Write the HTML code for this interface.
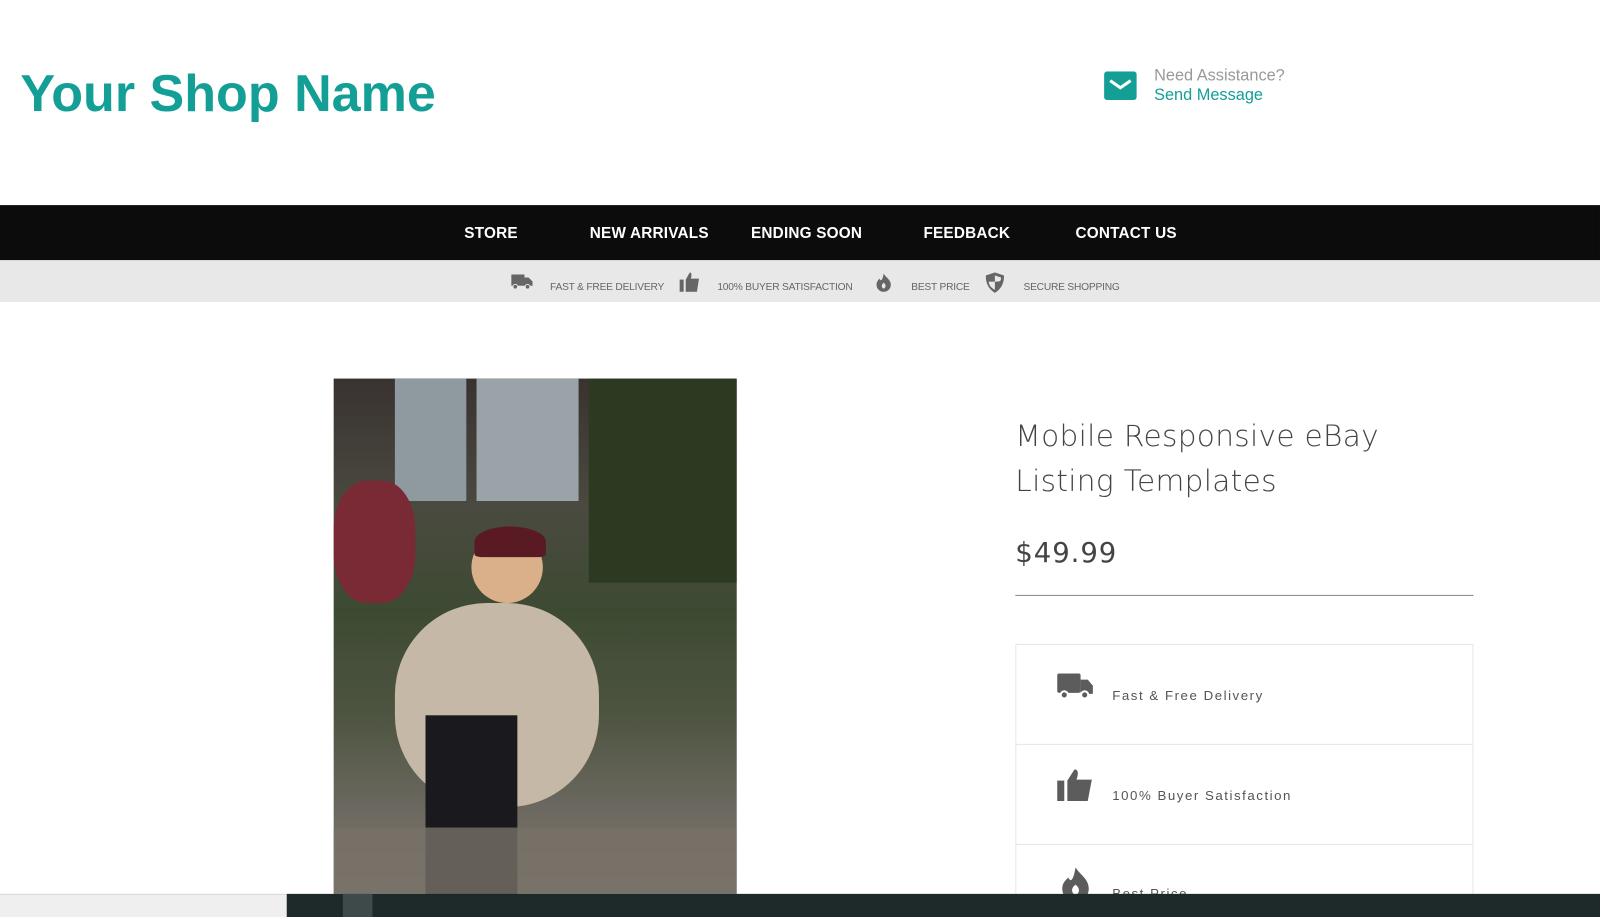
<!DOCTYPE html>
<html><head><meta charset="utf-8"><style>
*{margin:0;padding:0;box-sizing:border-box}
body{width:1600px;height:899px;overflow:hidden;background:#fff;font-family:"Liberation Sans",sans-serif;position:relative}
#w{position:absolute;left:0;top:0;width:1568px;height:881px;transform:scale(1.0204);transform-origin:0 0}
.a{position:absolute}
.nav{left:0;top:201px;width:1568px;height:54px;background:#0c0c0c}
.nav span{position:absolute;top:19px;color:#fff;font-size:15px;font-weight:bold;letter-spacing:0.2px}
.strip{left:0;top:255px;width:1568px;height:41px;background:#e8e8e8}
.strip span{position:absolute;top:21px;color:#666;font-size:10px;letter-spacing:-0.2px}
.box{left:995px;width:449px;border:1px solid #e6e6e6;border-bottom:none;background:#fff}
.box span{position:absolute;left:94px;color:#555;font-size:13px;letter-spacing:1.5px}
</style></head><body><div id="w">
<div class="a" style="left:20px;top:62px;font-size:51px;font-weight:bold;color:#139e96">Your Shop Name</div>
<svg class="a" style="left:1082px;top:70px" width="32" height="28" viewBox="0 0 32 28"><rect width="32" height="28" rx="3" fill="#139e96"/><path d="M6 9 L16 16 L26 9" stroke="#fff" stroke-width="3" fill="none"/></svg>
<div class="a" style="left:1131px;top:66px;font-size:16px;color:#999">Need Assistance?</div>
<div class="a" style="left:1131px;top:85px;font-size:16px;color:#139e96">Send Message</div>
<div class="a nav"><span style="left:455px">STORE</span><span style="left:578px">NEW ARRIVALS</span><span style="left:736px">ENDING SOON</span><span style="left:905px">FEEDBACK</span><span style="left:1054px">CONTACT US</span></div>
<div class="a strip">
<svg class="a" style="left:501px;top:13px" width="21" height="16" viewBox="0 0 21 16"><rect x="0" y="1" width="13" height="11" fill="#666"/><path d="M13 4h4l4 4v4h-8z" fill="#666"/><circle cx="4" cy="13" r="2.3" fill="#666" stroke="#e8e8e8"/><circle cx="16" cy="13" r="2.3" fill="#666" stroke="#e8e8e8"/></svg>
<span style="left:539px">FAST &amp; FREE DELIVERY</span>
<svg class="a" style="left:666px;top:12px" width="20" height="19" viewBox="0 0 20 19"><rect x="0" y="7" width="4" height="12" fill="#666"/><path d="M6 7 L10 0 C12 0 12 3 11 6 L19 6 L17 19 L6 19z" fill="#666"/></svg>
<span style="left:703px">100% BUYER SATISFACTION</span>
<svg class="a" style="left:858px;top:13px" width="16" height="18" viewBox="0 0 16 18"><path d="M8 0 C10 4 15 6 15 11 A7 7 0 0 1 1 11 C1 8 3 6 4 5 C5 8 7 7 8 0z M8 9 C6 11 5 13 8 15 C11 13 10 11 8 9z" fill="#666" fill-rule="evenodd"/></svg>
<span style="left:893px">BEST PRICE</span>
<svg class="a" style="left:966px;top:12px" width="18" height="20" viewBox="0 0 18 20"><path d="M9 0 L18 3 C18 12 14 17 9 20 C4 17 0 12 0 3z" fill="#666"/><path d="M9 3 L15 5 C15 9 14 9 9 9z M9 9 L9 17 C5 15 3 12 3 9z" fill="#e8e8e8"/></svg>
<span style="left:1003px">SECURE SHOPPING</span>
</div>
<div class="a" style="left:327px;top:371px;width:395px;height:505px;overflow:hidden;background:linear-gradient(180deg,#3a3230 0%,#4a4a40 25%,#3d4a32 45%,#4d5440 65%,#6e6a62 85%,#807a72 100%)">
<div class="a" style="left:60px;top:0;width:70px;height:120px;background:#8f99a0"></div>
<div class="a" style="left:140px;top:0;width:100px;height:120px;background:#9aa3a8"></div>
<div class="a" style="left:250px;top:0;width:145px;height:200px;background:#2c3a22"></div>
<div class="a" style="left:0;top:100px;width:80px;height:120px;background:#7a2a34;border-radius:40%"></div>
<div class="a" style="left:60px;top:220px;width:200px;height:200px;background:#c6b8a6;border-radius:45%"></div>
<div class="a" style="left:135px;top:150px;width:70px;height:70px;background:#d9b089;border-radius:50%"></div>
<div class="a" style="left:138px;top:145px;width:70px;height:30px;background:#5a1a24;border-radius:50% 50% 10% 10%"></div>
<div class="a" style="left:90px;top:330px;width:90px;height:175px;background:#1a1a1e"></div>
<div class="a" style="left:0;top:440px;width:395px;height:65px;background:#777068;opacity:.8"></div>
</div>
<div class="a" style="left:995px;top:405px;font-size:29px;color:#444;letter-spacing:0.3px;line-height:44px;font-family:'DejaVu Sans',sans-serif;font-weight:300">Mobile Responsive eBay<br>Listing Templates</div>
<div class="a" style="left:995px;top:527px;font-size:27px;color:#444;letter-spacing:0.9px;font-family:'DejaVu Sans',sans-serif">$49.99</div>
<div class="a" style="left:995px;top:583px;width:449px;height:1px;background:#888"></div>
<div class="a box" style="top:631px;height:98px"><svg class="a" style="left:40px;top:28px" width="36" height="27" viewBox="0 0 36 27"><rect x="0" y="0" width="23" height="19" rx="2" fill="#5c5c5c"/><path d="M23 6h7l5 6v8h-12z" fill="#5c5c5c"/><circle cx="7" cy="21" r="3.5" fill="#5c5c5c" stroke="#fff" stroke-width="2"/><circle cx="27" cy="21" r="3.5" fill="#5c5c5c" stroke="#fff" stroke-width="2"/></svg><span style="top:42px">Fast &amp; Free Delivery</span></div>
<div class="a box" style="top:729px;height:98px"><svg class="a" style="left:40px;top:24px" width="35" height="32" viewBox="0 0 35 32"><rect x="0" y="11" width="7" height="20" fill="#5c5c5c"/><path d="M10 11 L17 0 C21 0 21 5 19 10 L34 10 L30 31 L10 31z" fill="#5c5c5c"/></svg><span style="top:42px">100% Buyer Satisfaction</span></div>
<div class="a box" style="top:827px;height:60px"><svg class="a" style="left:44px;top:22px" width="28" height="34" viewBox="0 0 28 34"><path d="M14 0 C18 7 27 11 27 21 A13 13 0 0 1 1 21 C1 15 5 12 7 10 C9 15 12 13 14 0z M14 17 C10 20 9 24 14 28 C19 24 18 20 14 17z" fill="#5c5c5c" fill-rule="evenodd"/></svg><span style="top:40px">Best Price</span></div>
<div class="a" style="left:0;top:876px;width:281px;height:23px;background:#efefef;border-top:1px solid #d8d8d8"></div>
<div class="a" style="left:281px;top:876px;width:1319px;height:23px;background:#1e2a2a"></div>
<div class="a" style="left:336px;top:876px;width:29px;height:23px;background:#3e4a4a"></div>
</div></body></html>
